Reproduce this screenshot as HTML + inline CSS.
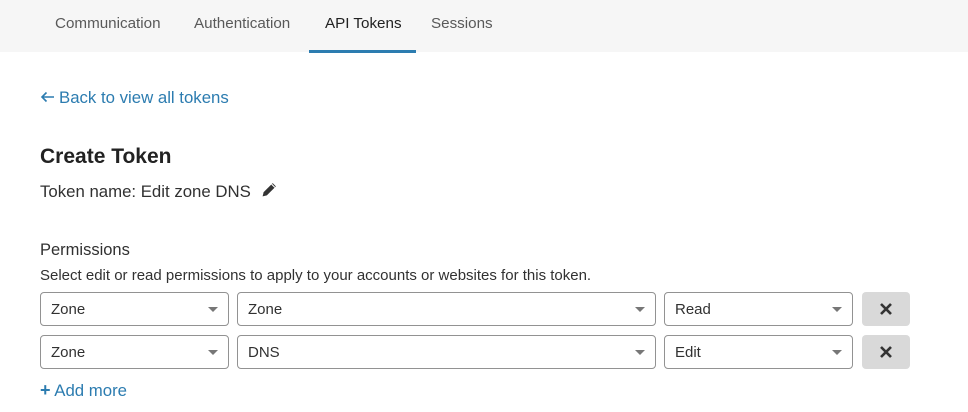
<!DOCTYPE html>
<html><head><meta charset="utf-8"><style>
*{box-sizing:border-box;margin:0;padding:0}
body{width:968px;height:412px;background:#fff;font-family:"Liberation Sans",sans-serif;color:#313131;position:relative;overflow:hidden}
.hdr{position:absolute;left:0;top:0;width:968px;height:52px;background:#f6f6f6}
.tab{position:absolute;top:15px;font-size:15.2px;color:#595959}
.act{color:#222}
.ul{position:absolute;left:309px;top:50px;width:107px;height:3px;background:#2c7cb0}
.t{position:absolute;white-space:nowrap}
.sel{position:absolute;height:34px;border:1px solid #929292;border-radius:4px;font-size:15px;padding:8px 10px 0;color:#313131}
.sel:after{content:"";position:absolute;right:10px;top:14px;border-left:5px solid transparent;border-right:5px solid transparent;border-top:5px solid #777}
.btn{position:absolute;width:48px;height:34px;background:#d9d9d9;border-radius:4px}
</style></head><body>
<div class="hdr">
<div class="tab" style="left:55px">Communication</div>
<div class="tab" style="left:194px">Authentication</div>
<div class="tab act" style="left:325px">API Tokens</div>
<div class="tab" style="left:431px">Sessions</div>
<div class="ul"></div>
</div>
<div class="t" style="left:40px;top:88px;font-size:16.8px;color:#2c7cb0"><svg width="15" height="12" viewBox="0 0 15 12" style="vertical-align:0;margin-right:4px"><path d="M14 6H2M6.5 1.5L2 6l4.5 4.5" stroke="#2c7cb0" stroke-width="1.6" fill="none"/></svg>Back to view all tokens</div>
<div class="t" style="left:40px;top:145px;font-size:21px;font-weight:bold;color:#222">Create Token</div>
<div class="t" style="left:40px;top:181px;font-size:16.8px">Token name: Edit zone DNS <svg width="17" height="17" viewBox="0 0 16 16" style="vertical-align:-1px;margin-left:6px"><path d="M1.5 14.5l1-4 8.5-8.5 3 3-8.5 8.5z" fill="#333"/><path d="M10 3l3 3" stroke="#fff" stroke-width="1"/></svg></div>
<div class="t" style="left:40px;top:241px;font-size:16.5px">Permissions</div>
<div class="t" style="left:40px;top:267px;font-size:15px">Select edit or read permissions to apply to your accounts or websites for this token.</div>

<div class="sel" style="left:40px;top:292px;width:189px">Zone</div>
<div class="sel" style="left:237px;top:292px;width:419px">Zone</div>
<div class="sel" style="left:664px;top:292px;width:189px">Read</div>
<div class="btn" style="left:862px;top:292px"><svg width="48" height="34"><path d="M19 12l10 10M29 12l-10 10" stroke="#333" stroke-width="2.6"/></svg></div>

<div class="sel" style="left:40px;top:335px;width:189px">Zone</div>
<div class="sel" style="left:237px;top:335px;width:419px">DNS</div>
<div class="sel" style="left:664px;top:335px;width:189px">Edit</div>
<div class="btn" style="left:862px;top:335px"><svg width="48" height="34"><path d="M19 12l10 10M29 12l-10 10" stroke="#333" stroke-width="2.6"/></svg></div>

<div class="t" style="left:40px;top:380px;font-size:16.8px;color:#2c7cb0"><b style="font-size:18px">+</b> Add more</div>
</body></html>
